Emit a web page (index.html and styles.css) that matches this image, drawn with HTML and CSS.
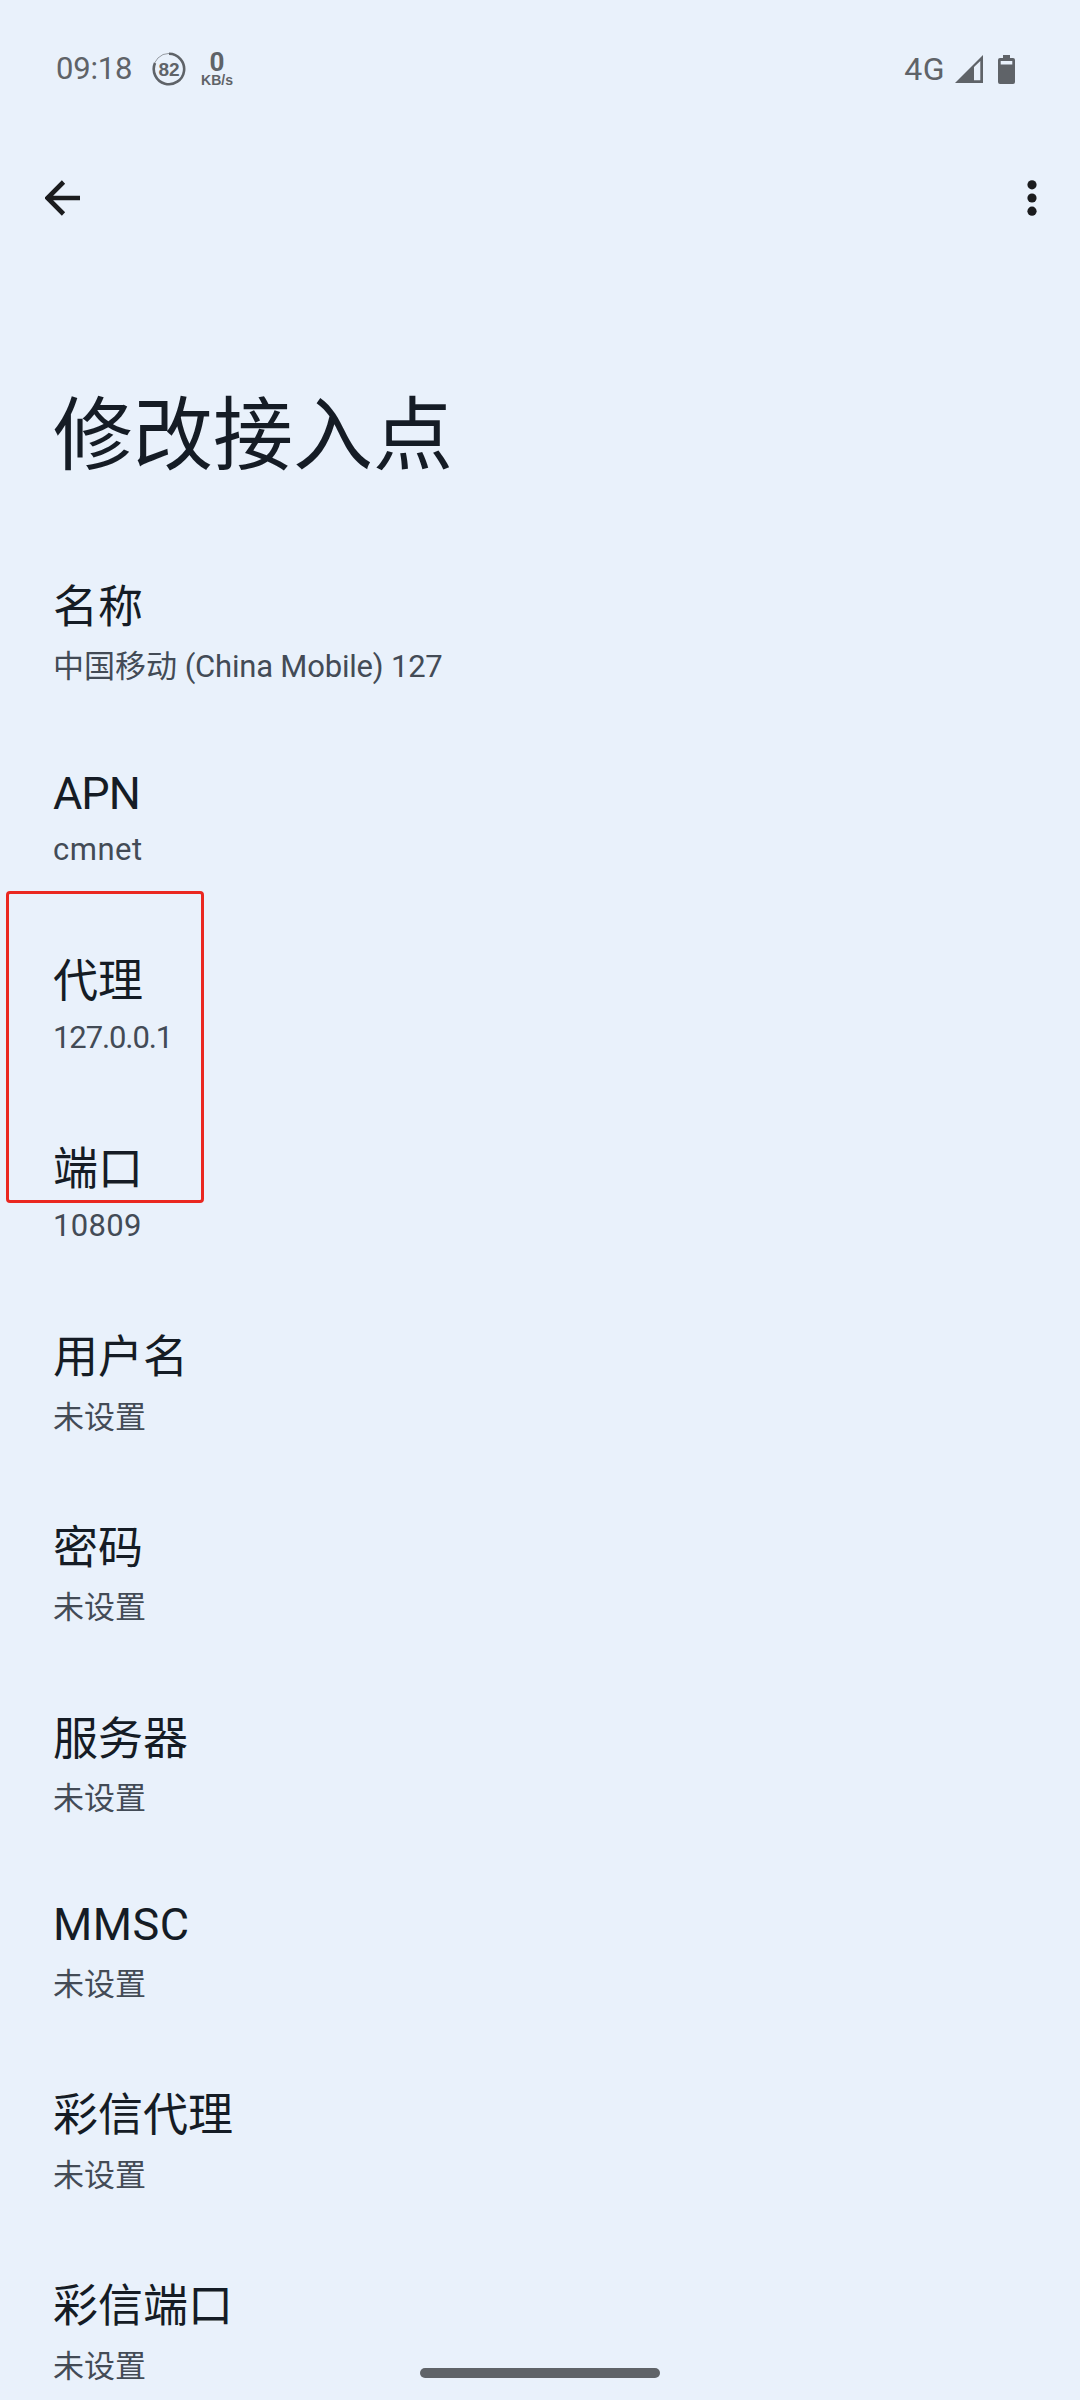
FILE: index.html
```html
<!DOCTYPE html>
<html lang="zh-CN">
<head>
<meta charset="utf-8">
<title>修改接入点</title>
<link rel="stylesheet" href="styles.css">
</head>
<body>
<div class="screen">
  <header class="status">
    <span class="clock">09:18</span>
    <svg class="ring" viewBox="0 0 34 34"><circle cx="17" cy="17" r="15.6" fill="none" stroke="#5f6368" stroke-width="1" opacity=".6"/><path d="M17 1.8A15.2 15.2 0 1 1 3 11" fill="none" stroke="#5f6368" stroke-width="2.6"/><text x="17" y="23.6" text-anchor="middle" class="ring-text">82</text></svg>
    <div class="speed"><span class="speed-value">0</span><span class="speed-unit">KB/s</span></div>
    <span class="network">4G</span>
    <svg class="signal" viewBox="0 0 28 28"><path fill-rule="evenodd" fill="#5f6368" d="M0 28L28 0V28ZM19 12V25.3H25.3V6Z"/></svg>
    <svg class="battery" viewBox="0 0 17 29"><path fill-rule="evenodd" fill="#5f6368" d="M5 0H12V3H15Q17 3 17 5V27Q17 29 15 29H2Q0 29 0 27V5Q0 3 2 3H5ZM2.7 6V9.5H14.3V6Z"/></svg>
  </header>
  <nav class="toolbar">
    <svg class="back" viewBox="0 0 36 36"><path d="M35 18H4M18.5 2L2.5 18L18.5 34" fill="none" stroke="#1b1c1e" stroke-width="4.6"/></svg>
    <svg class="more" viewBox="0 0 10 36"><g fill="#1b1c1e"><circle cx="5" cy="4.8" r="4.6"/><circle cx="5" cy="18" r="4.6"/><circle cx="5" cy="31.2" r="4.6"/></g></svg>
  </nav>
  <h1 class="title">修改接入点</h1>
  <main class="list">
    <section class="row"><h2 class="name">名称</h2><p class="value">中国移动 <span class="carrier">(China Mobile) 127</span></p></section>
    <section class="row"><h2 class="name latin apn">APN</h2><p class="value latin cmnet">cmnet</p></section>
    <section class="row"><h2 class="name">代理</h2><p class="value latin address">127.0.0.1</p></section>
    <section class="row"><h2 class="name">端口</h2><p class="value latin port">10809</p></section>
    <section class="row"><h2 class="name">用户名</h2><p class="value">未设置</p></section>
    <section class="row"><h2 class="name">密码</h2><p class="value">未设置</p></section>
    <section class="row"><h2 class="name">服务器</h2><p class="value">未设置</p></section>
    <section class="row"><h2 class="name latin mmsc">MMSC</h2><p class="value">未设置</p></section>
    <section class="row"><h2 class="name">彩信代理</h2><p class="value">未设置</p></section>
    <section class="row"><h2 class="name">彩信端口</h2><p class="value">未设置</p></section>
  </main>
  <div class="highlight"></div>
  <div class="gesture"></div>
</div>
</body>
</html>
```
FILE: styles.css
```css
* { box-sizing: border-box; }
body { margin: 0; background: #e9f1fb; }
.screen {
  position: relative;
  width: 1080px;
  height: 2400px;
  overflow: hidden;
  font-family: Roboto, "Noto Sans CJK SC", sans-serif;
  color: #151c25;
}
h1, h2, p { margin: 0; font-weight: 400; white-space: nowrap; }
svg { display: block; flex: none; }
.status {
  display: flex;
  align-items: center;
  height: 138px;
  padding: 0 65px 0 56px;
  color: #5f6368;
}
.clock { width: 96px; font: 450 31px/40px Roboto, sans-serif; letter-spacing: -.2px; }
.ring { width: 34px; height: 34px; }
.ring-text { font: 700 19px "Liberation Sans", sans-serif; fill: #5f6368; }
.speed { display: flex; flex-direction: column; align-items: center; margin-left: 14px; width: 34px; }
.speed-value { font: 700 26px/22px Roboto, sans-serif; }
.speed-unit { font: 700 14px/14px "Liberation Sans", sans-serif; }
.network { margin-left: auto; font: 450 32px/40px Roboto, sans-serif; letter-spacing: .5px; }
.signal { width: 28px; height: 28px; margin-left: 10px; }
.battery { width: 17px; height: 29px; margin-left: 15px; }
.toolbar {
  display: flex;
  justify-content: space-between;
  align-items: center;
  height: 120px;
  padding: 0 43.5px 0 45px;
}
.back { width: 36px; height: 36px; }
.more { width: 10px; height: 36px; }
.title { padding: 118px 53px 0; font-size: 80px; line-height: 120px; }
.list { padding: 45px 53px 0; }
.row { padding-top: 35px; padding-bottom: 36px; }
.name { font-size: 45px; line-height: 64px; height: 66px; }
.value { font-size: 31px; line-height: 46px; height: 53.7px; padding-top: 2.4px; color: #434b56; }
.name.latin { height: 61.5px; line-height: 53px; }
.value.latin { height: 51px; line-height: 43px; padding-top: 0; }
.name.mmsc { line-height: 54px; }
.apn { letter-spacing: -1px; }
.mmsc { letter-spacing: .5px; }
.cmnet { letter-spacing: .5px; }
.address { letter-spacing: -1.1px; }
.port { letter-spacing: .3px; }
.carrier { letter-spacing: -.2px; }
.highlight {
  position: absolute;
  left: 6px; top: 891px;
  width: 198px; height: 312px;
  border: 3px solid #ea2720;
  border-radius: 4px;
}
.gesture {
  position: absolute;
  left: 420px; top: 2368px;
  width: 240px; height: 10px;
  border-radius: 5px;
  background: #5f6368;
}
```
